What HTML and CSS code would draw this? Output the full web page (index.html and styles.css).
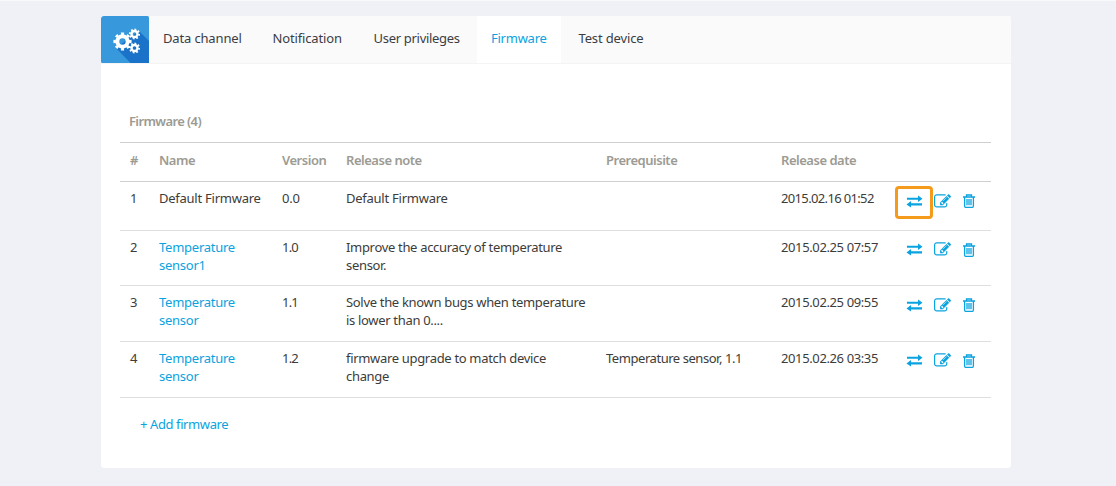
FILE: index.html
```html
<!DOCTYPE html>
<html lang="en">
<head>
<meta charset="utf-8">
<title>Firmware</title>
<link rel="stylesheet" href="styles.css">
</head>
<body>
<svg class="defs" width="0" height="0" aria-hidden="true">
  <symbol id="swap" viewBox="0 0 17 13">
    <path d="M1 2.700h11V0.500L16.500 3.700 12 7V4.800H1zM16 8.300H5V6.100L0.500 9.400 5 12.500V10.400H16z"/>
  </symbol>
  <symbol id="edit" viewBox="0 0 1792 1792">
    <path d="M888 1184l116-116-152-152-116 116v56h96v96h56zm440-720q-16-16-33 1l-350 350q-17 17-1 33t33-1l350-350q17-17 1-33zm80 594v190q0 119-84.500 203.500t-203.500 84.500h-832q-119 0-203.500-84.500t-84.500-203.500v-832q0-119 84.500-203.500t203.500-84.500h832q63 0 117 25 15 7 18 23 3 17-9 29l-49 49q-14 14-32 8-23-6-45-6h-832q-66 0-113 47t-47 113v832q0 66 47 113t113 47h832q66 0 113-47t47-113v-126q0-13 9-22l64-64q15-15 35-7t20 29zm-96-738l288 288-672 672h-288v-288zm444 132l-92 92-288-288 92-92q28-28 68-28t68 28l152 152q28 28 28 68t-28 68z"/>
  </symbol>
  <symbol id="trash" viewBox="0 0 12 14">
    <path d="M0 3h12M3.500 3V1h5v2M1.600 3v9.100q0 1.200 1 1.200h6.800q1 0 1-1.200V3M4 5v6.300M6 5v6.300M8 5v6.300" fill="none" stroke="currentColor" stroke-width="1.300"/>
  </symbol>
</svg>
<main class="panel">
  <header class="bar">
    <svg class="logo" width="48" height="47" viewBox="0 0 48 47">
      <rect width="48" height="47" rx="1.500" fill="#3799db"/>
      <path d="M38 15L48 25V47H29.500L15 32z" fill="#1a73c9"/>
      <g fill="none" stroke="#fff">
        <circle cx="21.500" cy="25.500" r="5.200" stroke-width="4"/>
        <circle cx="21.500" cy="25.500" r="7.700" stroke-width="2.800" pathLength="80" stroke-dasharray="5 5" stroke-dashoffset="2.500"/>
        <circle cx="33.500" cy="18" r="3" stroke-width="2.300"/>
        <circle cx="33.500" cy="18" r="4.600" stroke-width="1.800" pathLength="80" stroke-dasharray="5 5"/>
        <circle cx="33.500" cy="32" r="3" stroke-width="2.300"/>
        <circle cx="33.500" cy="32" r="4.600" stroke-width="1.800" pathLength="80" stroke-dasharray="5 5"/>
      </g>
    </svg>
    <nav class="tabs">
      <a class="tab t-data">Data channel</a>
      <a class="tab t-note">Notification</a>
      <a class="tab t-user">User privileges</a>
      <a class="tab t-firm active">Firmware</a>
      <a class="tab t-test">Test device</a>
    </nav>
  </header>
  <section class="content">
    <h1 class="title">Firmware (4)</h1>
    <table class="grid">
      <colgroup><col class="c-num"><col class="c-name"><col class="c-ver"><col class="c-note"><col class="c-pre"><col class="c-date"><col class="c-act"></colgroup>
      <thead>
        <tr><th>#</th><th>Name</th><th>Version</th><th>Release note</th><th>Prerequisite</th><th>Release date</th><th></th></tr>
      </thead>
      <tbody>
        <tr class="first"><td>1</td><td>Default Firmware</td><td>0.0</td><td>Default Firmware</td><td class="pre"></td><td class="date narrow">2015.02.16 01:52</td>
          <td><div class="actions"><span class="swap marked"><svg><use href="#swap"/></svg></span><svg class="edit"><use href="#edit"/></svg><svg class="trash"><use href="#trash"/></svg></div></td></tr>
        <tr><td>2</td><td><a>Temperature<br>sensor1</a></td><td class="ver">1.0</td><td class="note">Improve the accuracy of temperature<br>sensor.</td><td class="pre"></td><td class="date">2015.02.25 07:57</td>
          <td><div class="actions"><span class="swap"><svg><use href="#swap"/></svg></span><svg class="edit"><use href="#edit"/></svg><svg class="trash"><use href="#trash"/></svg></div></td></tr>
        <tr><td>3</td><td><a>Temperature<br>sensor</a></td><td class="ver">1.1</td><td class="note">Solve the known bugs when temperature<br>is lower than 0....</td><td class="pre"></td><td class="date">2015.02.25 09:55</td>
          <td><div class="actions"><span class="swap"><svg><use href="#swap"/></svg></span><svg class="edit"><use href="#edit"/></svg><svg class="trash"><use href="#trash"/></svg></div></td></tr>
        <tr><td>4</td><td><a>Temperature<br>sensor</a></td><td class="ver">1.2</td><td class="note">firmware upgrade to match device<br>change</td><td class="pre">Temperature sensor, 1.1</td><td class="date">2015.02.26 03:35</td>
          <td><div class="actions"><span class="swap"><svg><use href="#swap"/></svg></span><svg class="edit"><use href="#edit"/></svg><svg class="trash"><use href="#trash"/></svg></div></td></tr>
      </tbody>
    </table>
    <a class="add">+ Add firmware</a>
  </section>
</main>
</body>
</html>
```
FILE: styles.css
```css
*, *::after { box-sizing: border-box; }
body {
  margin: 0;
  height: 486px;
  padding: 15px 105px 0 101px;
  background: #eff1f6;
  border-top: 1px solid #f8f9fb;
  font-family: "Noto Sans", sans-serif;
  font-size: 13px;
  line-height: 18px;
  color: #3c3c3a;
  overflow: hidden;
}
.defs { display: none; }
.panel {
  height: 452px;
  background: #fff;
  border-radius: 3px;
  overflow: hidden;
}
.bar {
  display: flex;
  height: 48px;
  background: #fafafa;
  border-bottom: 1px solid #f4f4f5;
}
.logo { flex: none; }
.tabs { display: flex; }
.tab {
  padding: 13px 0 0 14px;
  white-space: nowrap;
  color: #3b3d44;
  letter-spacing: -0.15px;
}
.t-data { width: 109.500px; }
.t-note { width: 101px; }
.t-user { width: 117.500px; letter-spacing: -0.300px; }
.t-firm { width: 84px; }
.t-test { padding-left: 17.500px; }
.tab.active { background: #fff; color: #0aa3e0; letter-spacing: -0.250px; }
.content { padding: 48px 20px 0 19px; }
.title {
  margin: 0;
  padding: 0 9px;
  height: 30px;
  font-size: 13px;
  line-height: 18px;
  font-weight: 600;
  letter-spacing: -0.620px;
  color: #9c9b93;
}
.grid {
  width: 871px;
  table-layout: fixed;
  border-collapse: separate;
  border-spacing: 0;
}
.c-num { width: 29px; }
.c-name { width: 123px; }
.c-ver { width: 64px; }
.c-note { width: 260px; }
.c-pre { width: 175px; }
.c-date { width: 124px; }
th {
  height: 40px;
  padding: 0 0 4px 10px;
  border-top: 1px solid #cfcfcf;
  border-bottom: 1px solid #cfcfcf;
  text-align: left;
  font-weight: 600;
  letter-spacing: -0.480px;
  color: #9c9b93;
}
td {
  height: 55.700px;
  padding: 7px 0 0 10px;
  vertical-align: top;
  border-bottom: 1px solid #dfdfdf;
  white-space: nowrap;
  letter-spacing: -0.250px;
}
.first td { height: 48.500px; }
.note { letter-spacing: -0.320px; }
.pre { letter-spacing: -0.450px; }
.ver { letter-spacing: -0.800px; }
.date { letter-spacing: -0.380px; }
.date.narrow { letter-spacing: -0.650px; }
td a, .add { color: #0aa3e0; }
.actions {
  display: flex;
  align-items: center;
  height: 24px;
  padding-left: 1px;
  color: #0aa3e0;
  fill: currentColor;
}
.swap { display: flex; position: relative; }
.swap svg { width: 17px; height: 13px; }
.marked::after {
  content: "";
  position: absolute;
  left: -11px;
  top: -9px;
  width: 38px;
  height: 33px;
  border: 3px solid #f59b1c;
  border-radius: 4px;
}
.edit { width: 17px; height: 17px; margin-left: 11px; }
.trash { width: 12px; height: 14px; margin-left: 12px; }
.add { display: block; padding: 17px 0 0 20px; letter-spacing: -0.400px; }
```
